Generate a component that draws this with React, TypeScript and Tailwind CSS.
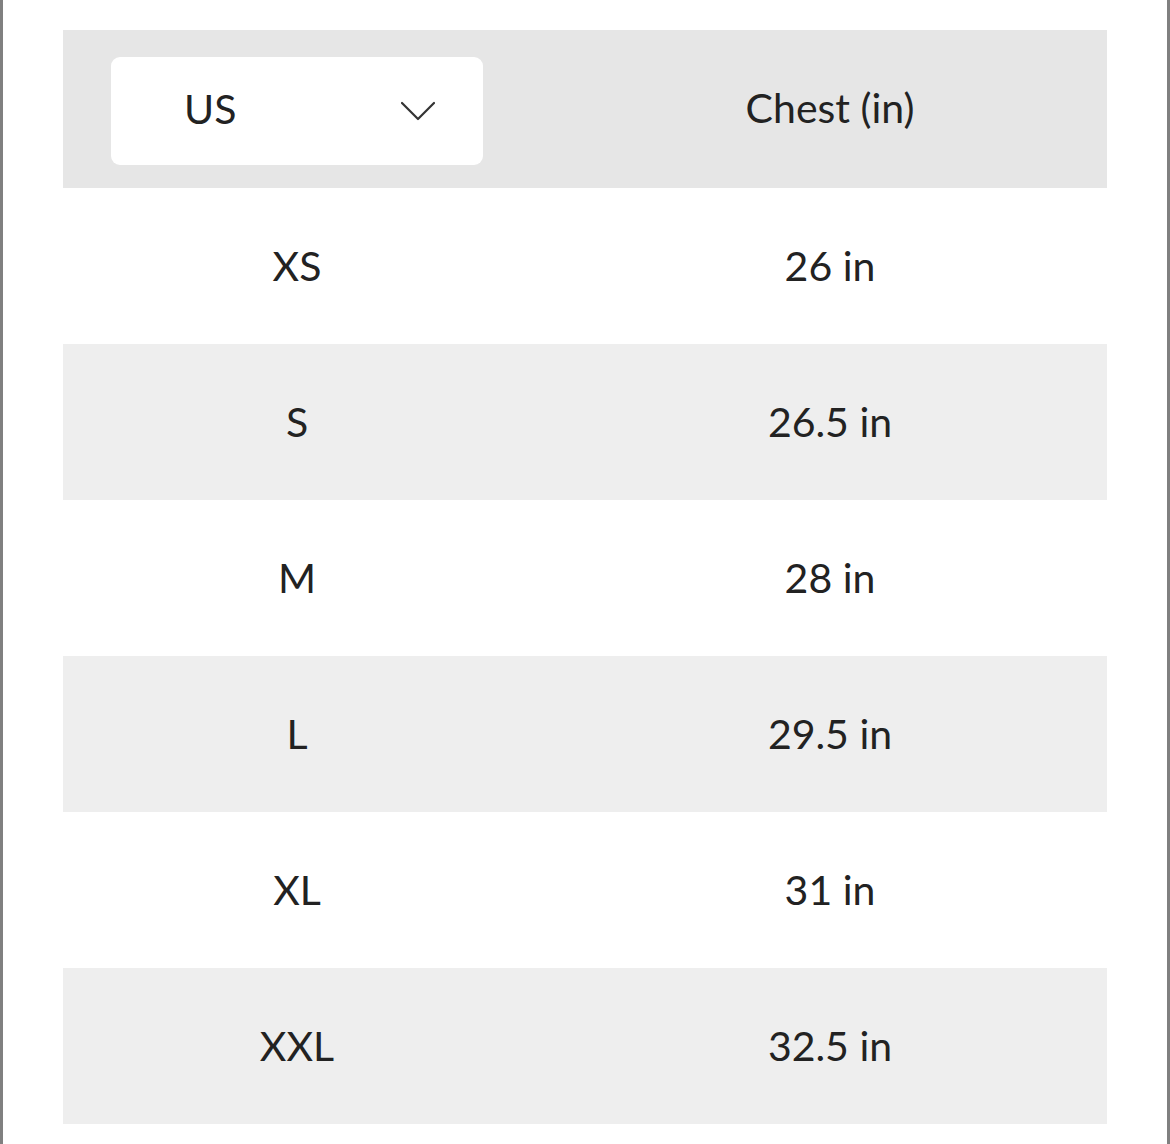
const rows = [
  { size: 'XS', chest: '26 in' },
  { size: 'S', chest: '26.5 in' },
  { size: 'M', chest: '28 in' },
  { size: 'L', chest: '29.5 in' },
  { size: 'XL', chest: '31 in' },
  { size: 'XXL', chest: '32.5 in' },
];

export default function App() {
  return (
    <div
      className="min-h-[1144px] bg-white border-x-[3px] border-[#808080] px-[60px] pt-[30px] pb-[20px] text-[#222]"
      style={{ fontFamily: 'Lato, "Open Sans", sans-serif' }}
    >
      {/* header */}
      <div className="flex h-[158px] bg-[#e6e6e6]">
        <div className="w-[468px] px-[48px] pt-[27px]">
          <button className="w-full h-[108px] bg-white rounded-[9px] flex items-center justify-between pl-[73px] pr-[48px]">
            <span className="text-[41px] leading-none mb-[6px]">US</span>
            <svg width="34" height="20" viewBox="0 0 34 20" fill="none" className="text-[#333]">
              <polyline points="1,2 17,18 33,2" stroke="currentColor" strokeWidth="2.2" strokeLinecap="round" strokeLinejoin="round" />
            </svg>
          </button>
        </div>
        <div className="flex-1 pl-[22px] flex items-center justify-center text-[41px] pb-[2px]">Chest (in)</div>
      </div>

      {rows.map((r, i) => (
        <div key={r.size} className={`flex h-[156px] ${i % 2 === 1 ? 'bg-[#eeeeee]' : 'bg-white'}`}>
          <div className="w-[468px] flex items-center justify-center text-[41px]">{r.size}</div>
          <div className="flex-1 pl-[22px] flex items-center justify-center text-[41px]">{r.chest}</div>
        </div>
      ))}
    </div>
  );
}
